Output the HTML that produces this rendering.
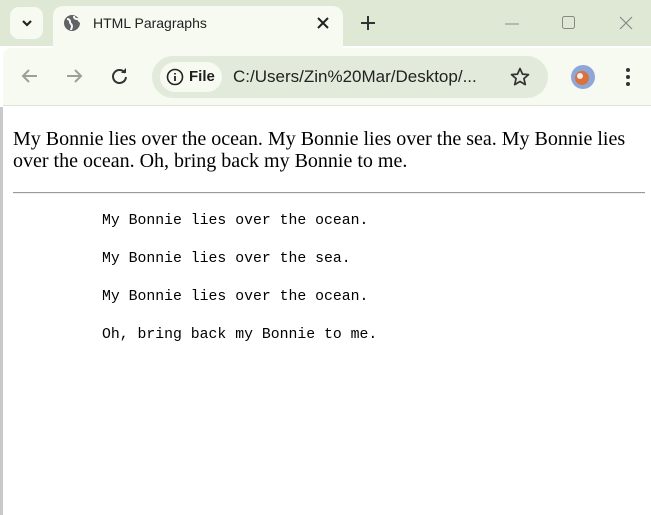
<!DOCTYPE html>
<html><head><style>
*{margin:0;padding:0;box-sizing:border-box}
body{width:651px;height:515px;overflow:hidden;background:#fff;font-family:"Liberation Sans",sans-serif;position:relative}
.strip{position:absolute;left:0;top:0;width:651px;height:46px;background:#dfe8d5}
.tab{position:absolute;left:53px;top:6px;width:290px;height:42px;background:#f6faf1;border-radius:10px 10px 0 0}
.dd{position:absolute;left:10px;top:7px;width:33px;height:32px;background:#f6faf1;border-radius:9px}
.bar{position:absolute;left:3px;top:48px;width:648px;height:58px;background:#f6faf1;border-radius:8px 0 0 0;border-bottom:1px solid #dde3d6}
.omni{position:absolute;left:152px;top:56px;width:396px;height:42px;background:#e1eadb;border-radius:21px}
.chip{position:absolute;left:160px;top:62px;width:62px;height:30px;background:#f6faf1;border-radius:15px}
.t{position:absolute;white-space:nowrap;color:#1f1f1f}
.content{position:absolute;left:3px;top:107px;right:0;bottom:0;background:#fff}
.left{position:absolute;left:0;top:107px;width:3px;height:408px;background:#c9c9c9}
p.s{position:absolute;left:13px;top:128px;width:636px;font-family:"Liberation Serif",serif;font-size:20px;line-height:22px;color:#000}
hr{position:absolute;left:13px;top:192px;width:632px;border:0;border-top:1px solid #9a9a9a;border-bottom:1px solid #eee}
.m{position:absolute;left:102px;font-family:"Liberation Mono",monospace;font-size:14.8px;color:#000;white-space:pre}
</style></head><body>
<div class="strip"></div>
<div class="dd"></div>
<svg style="position:absolute;left:20px;top:17px" width="14" height="12"><path d="M3 4l4 4 4-4" stroke="#222" stroke-width="2.2" fill="none"/></svg>
<div class="tab"></div>
<svg style="position:absolute;left:63px;top:14px" width="18" height="18" viewBox="0 0 18 18"><circle cx="9" cy="9" r="8" fill="#5f6368"/><path d="M4 5c2 0 3 1 3 3s2 2 2 4-1 3-1 4M11 2c0 2 1 3 3 3s2 2 3 3" stroke="#f6faf1" stroke-width="2" fill="none"/></svg>
<div class="t" style="left:93px;top:15px;font-size:14px">HTML Paragraphs</div>
<svg style="position:absolute;left:317px;top:17px" width="12" height="12"><path d="M1 1l10 10M11 1L1 11" stroke="#222" stroke-width="2"/></svg>
<svg style="position:absolute;left:361px;top:16px" width="14" height="14"><path d="M7 0v14M0 7h14" stroke="#333" stroke-width="2"/></svg>
<svg style="position:absolute;left:505px;top:23px" width="14" height="2"><path d="M0 1h14" stroke="#888" stroke-width="1"/></svg>
<svg style="position:absolute;left:562px;top:16px" width="14" height="14"><rect x="0.5" y="0.5" width="12" height="12" rx="2" stroke="#888" fill="none"/></svg>
<svg style="position:absolute;left:619px;top:16px" width="14" height="14"><path d="M1 1l12 12M13 1L1 13" stroke="#888" stroke-width="1.2"/></svg>
<div class="bar"></div>
<svg style="position:absolute;left:20px;top:68px" width="18" height="16"><path d="M17 8H3M9 2L3 8l6 6" stroke="#9aa09a" stroke-width="2" fill="none"/></svg>
<svg style="position:absolute;left:66px;top:68px" width="18" height="16"><path d="M1 8h14M9 2l6 6-6 6" stroke="#9aa09a" stroke-width="2" fill="none"/></svg>
<svg style="position:absolute;left:111px;top:67px" width="18" height="18" viewBox="0 0 18 18"><path d="M14 6A6.5 6.5 0 1 0 15 10" stroke="#333" stroke-width="2" fill="none"/><path d="M10 6h5V1z" fill="#333"/></svg>
<div class="omni"></div><div class="chip"></div>
<svg style="position:absolute;left:166px;top:68px" width="18" height="18"><circle cx="9" cy="9" r="7.5" stroke="#222" stroke-width="1.6" fill="none"/><path d="M9 8v5M9 5v1.5" stroke="#222" stroke-width="1.8"/></svg>
<div class="t" style="left:189px;top:68px;font-size:15px;font-weight:bold">File</div>
<div class="t" style="left:233px;top:67px;font-size:17px;color:#222">C:/Users/Zin%20Mar/Desktop/...</div>
<svg style="position:absolute;left:510px;top:67px" width="20" height="20" viewBox="0 0 20 20"><path d="M10 1.5l2.5 5.6 6 .5-4.6 4 1.4 6L10 14.5 4.7 17.6l1.4-6-4.6-4 6-.5z" stroke="#333" stroke-width="1.7" fill="none" stroke-linejoin="round"/></svg>
<svg style="position:absolute;left:570px;top:64px" width="26" height="26"><circle cx="13" cy="13" r="12" fill="#8fa6d8"/><circle cx="12" cy="14" r="7" fill="#d9733a"/><circle cx="10" cy="12" r="3" fill="#eee"/></svg>
<svg style="position:absolute;left:625px;top:67px" width="6" height="20"><circle cx="3" cy="3" r="2" fill="#333"/><circle cx="3" cy="10" r="2" fill="#333"/><circle cx="3" cy="17" r="2" fill="#333"/></svg>
<div class="left"></div>
<div class="content"></div>
<p class="s">My Bonnie lies over the ocean. My Bonnie lies over the sea. My Bonnie lies over the ocean. Oh, bring back my Bonnie to me.</p>
<hr>
<div class="m" style="top:213px">My Bonnie lies over the ocean.</div>
<div class="m" style="top:251px">My Bonnie lies over the sea.</div>
<div class="m" style="top:289px">My Bonnie lies over the ocean.</div>
<div class="m" style="top:327px">Oh, bring back my Bonnie to me.</div>
</body></html>
